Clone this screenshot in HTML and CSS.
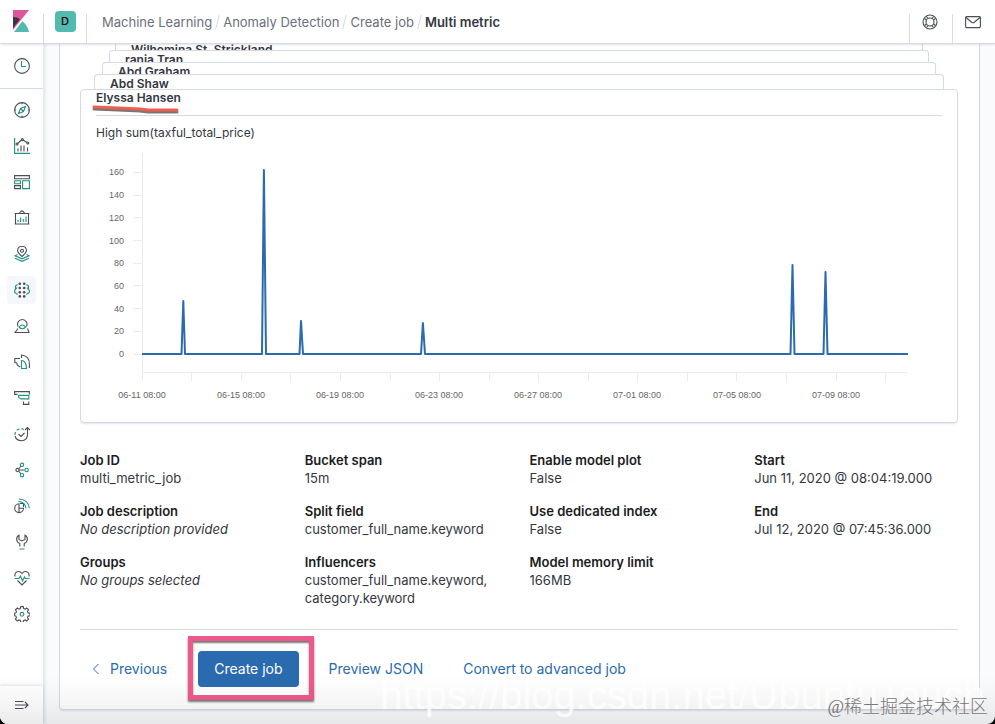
FILE: index.html
```html
<!DOCTYPE html>
<html lang="en">
<head>
    <meta charset="UTF-8">
    <meta name="viewport" content="width=device-width, initial-scale=1.0">
    <title>Create job - Multi metric</title>
    <link rel="stylesheet" href="styles.css">
</head>
<body>
<div class="app">
    <header class="header">
        <a href="#" class="logo" aria-label="Home">
            <svg width="16" height="22" viewBox="0 0 16 22">
                <path fill="#e0569b" d="M0 0h16L0 20z"/>
                <path fill="#343741" d="M0 7c3 0 5 .8 7 2.2L0 18z"/>
                <path fill="#54b9ae" d="M9.2 11.2c3.600 2.500 6 6.300 6.800 10.800H1z"/>
            </svg>
        </a>
        <div class="space"><button type="button" class="avatar">D</button></div>
        <nav class="breadcrumbs" aria-label="Breadcrumbs">
            <a href="#">Machine Learning</a>
            <a href="#">Anomaly Detection</a>
            <a href="#">Create job</a>
            <strong>Multi metric</strong>
        </nav>
        <button type="button" class="header-button" aria-label="Help">
            <svg width="16" height="16" viewBox="0 0 16 16" class="icon">
                <circle cx="8" cy="8" r="7"/>
                <circle cx="8" cy="8" r="4"/>
                <path d="M2.500 4.500l2 1.500M4.500 2.500l1.500 2M13.500 4.500l-2 1.500M11.500 2.500l-1.500 2M2.500 11.500l2-1.500M4.500 13.500l1.500-2M13.500 11.500l-2-1.500M11.500 13.500l-1.500-2"/>
            </svg>
        </button>
        <button type="button" class="header-button" aria-label="News">
            <svg width="16" height="16" viewBox="0 0 16 16" class="icon">
                <rect x=".6" y="2.600" width="14.800" height="11" rx="1"/>
                <path d="M1 3.500l6 5q1 .7 2 0l6-5"/>
            </svg>
        </button>
    </header>

    <div class="body">
        <nav class="sidebar" aria-label="Main">
            <a href="#" class="recent" aria-label="Recently viewed">
                <svg width="16" height="16" viewBox="0 0 16 16" class="icon"><circle cx="8" cy="8" r="7.400"/><path class="teal" d="M7.500 3v5.500H12"/></svg>
            </a>
            <ul>
                <li><a href="#" aria-label="Discover">
                    <svg width="16" height="16" viewBox="0 0 16 16" class="icon"><circle cx="8" cy="8" r="7.400"/><path d="M8 .6v1.600M8 13.800v1.600M.6 8h1.600M13.800 8h1.600"/><path class="teal" d="M11.500 4.500L9.500 9.500l-5 2 2-5zM7 7l2 2"/></svg>
                </a></li>
                <li><a href="#" aria-label="Visualize">
                    <svg width="16" height="16" viewBox="0 0 16 16" class="icon"><path class="teal" d="M.6 0v15.400H16"/><path d="M4 13.500v-3M7 13.500v-6M10 13.500v-6M13.500 13.500v-4M3.500 5.500l4-3.500M9 2l4 2.500"/><circle cx="3" cy="6" r="1"/><circle cx="8.300" cy="1.600" r="1"/><circle cx="13.800" cy="5" r="1"/></svg>
                </a></li>
                <li><a href="#" aria-label="Dashboard">
                    <svg width="16" height="16" viewBox="0 0 16 16" class="icon"><path d="M.6 1.600h14.800v3.200H.6zM.6 11.600h5.800v3H.6z"/><path class="teal" d="M.6 6.800h5.800v2.900H.6zM8.600 6.800h6.800v7.800H8.600z"/></svg>
                </a></li>
                <li><a href="#" aria-label="Canvas">
                    <svg width="16" height="16" viewBox="0 0 16 16" class="icon"><path d="M.6 3.500h14.800M1.500 3.500v10.500M14.500 3.500v10.500M.6 14h14.800M5 3.500l2-2.200q1-.8 2 0l2 2.200"/><path class="teal" d="M4 12v-2M6.600 12V7.500M9.300 12V9M12 12V6.500"/></svg>
                </a></li>
                <li><a href="#" aria-label="Maps">
                    <svg width="16" height="16" viewBox="0 0 16 16" class="icon"><path d="M8 10.500C5 8 3.600 6.500 3.600 4.600a4.400 4.400 0 0 1 8.800 0C12.400 6.500 11 8 8 10.500z"/><circle cx="8" cy="4.800" r="1.500"/><path class="teal" d="M3.500 8.500L1 9.800l7 3 7-3-2.500-1.300M1 12.300l7 3 7-3"/></svg>
                </a></li>
                <li><a href="#" class="active" aria-label="Machine Learning">
                    <svg width="16" height="16" viewBox="0 0 16 16" class="icon"><path class="teal" d="M3.500 2.500L1.500 4v3L.7 8.500v2l3 2M12.500 2.500l2 1.500v3l.8 1.500v2l-3 2M3 5.500l-1.500 2M13 5.500l1.500 2"/><g class="dots"><circle cx="5.800" cy="1.800" r="1.300"/><circle cx="10.200" cy="1.800" r="1.300"/><circle cx="5.800" cy="6" r="1.300"/><circle cx="10.200" cy="6" r="1.300"/><circle cx="5.800" cy="10.200" r="1.300"/><circle cx="10.200" cy="10.200" r="1.300"/><circle cx="5.800" cy="14.400" r="1.300"/><circle cx="10.200" cy="14.400" r="1.300"/></g></svg>
                </a></li>
                <li><a href="#" aria-label="Metrics">
                    <svg width="16" height="16" viewBox="0 0 16 16" class="icon"><path d="M4.200 8.500a4.700 4.700 0 1 1 8.200 0M4 10.500l-3 4h14l-1.500-4"/><path class="teal" d="M5 9q3.300-4 6.600 0-3.300 3.500-6.600 0z"/></svg>
                </a></li>
                <li><a href="#" aria-label="Logs">
                    <svg width="16" height="16" viewBox="0 0 16 16" class="icon"><path d="M6 4.500H.8v4l2 .5.500 2L6 13M7.500 4V1c5 .5 7.900 4 7.900 9v4"/><path class="teal" d="M7.500 6.500c3 0 5 3 5 8h-5z"/></svg>
                </a></li>
                <li><a href="#" aria-label="APM">
                    <svg width="16" height="16" viewBox="0 0 16 16" class="icon"><path d="M3.500 4.400H.6V1.600h14.800v2.800M9.500 11.600v2.800h5.300v-2.800"/><path class="teal" d="M4.600 5.400h10.200v3.500H7L4.600 7.500z"/></svg>
                </a></li>
                <li><a href="#" aria-label="Uptime">
                    <svg width="16" height="16" viewBox="0 0 16 16" class="icon"><path class="teal" stroke-dasharray="3 2" d="M1 9a6 6 0 0 1 9-5.500"/><path d="M1 10c2 6.500 11.800 6.500 12.500-1V2M11 4l2.500-2.500L16 4M4.500 8L7 10.500 10.500 7"/></svg>
                </a></li>
                <li><a href="#" aria-label="Graph">
                    <svg width="16" height="16" viewBox="0 0 16 16" class="icon"><path d="M4.500 8h6M5 6.500l2-2.500M5 9.500L7 12"/><circle cx="3.500" cy="8" r="1.600"/><g class="teal"><circle cx="8" cy="2.800" r="1.700"/><circle cx="12.600" cy="8" r="1.700"/><circle cx="8" cy="13.200" r="1.700"/></g></svg>
                </a></li>
                <li><a href="#" aria-label="SIEM">
                    <svg width="16" height="16" viewBox="0 0 16 16" class="icon"><path d="M5 5.800a4.400 4.400 0 1 0 4.500 4.500H5zM5 10L5 14.500M9.500 9V5.500H6"/><path class="teal" d="M4.500 3.500c4 0 7.500 3 7.500 7M5 1c6 0 10 4 10.300 9"/></svg>
                </a></li>
                <li><a href="#" aria-label="Dev Tools">
                    <svg width="16" height="16" viewBox="0 0 16 16" class="icon"><path d="M5.800 12.500V9.500C2 8 1.500 3 5 1.200V5.500l3 1.500 3-1.500V1.200C14.500 3 14 8 10.200 9.500v3"/><path class="teal" d="M5.500 15h5"/></svg>
                </a></li>
                <li><a href="#" aria-label="Stack Monitoring">
                    <svg width="16" height="16" viewBox="0 0 16 16" class="icon"><path d="M1 6.500c-1-5 4.500-6.500 7-3 2.500-3.500 8-2 7 3M3.500 10.500L8 15l4.500-4.500"/><path class="teal" d="M.5 8.500H5l1.500-2.500 2 5 2-4 .8 1.500h4.200"/></svg>
                </a></li>
                <li><a href="#" aria-label="Management">
                    <svg width="16" height="16" viewBox="0 0 16 16" class="icon"><path d="M6.700.6h2.600l.4 1.900 1.400.6 1.600-1.100 1.900 1.900-1.100 1.600.6 1.400 1.900.4v2.400l-1.900.4-.6 1.400 1.100 1.600-1.900 1.900-1.600-1.100-1.400.6-.4 1.900H6.700l-.4-1.900-1.400-.6L3.300 15l-1.900-1.900 1.100-1.600-.6-1.400-1.300-.4V7.300l1.300-.4.600-1.400-1.100-1.600L3.300 2l1.600 1.100 1.400-.6z"/><circle class="teal" cx="8" cy="8.300" r="1.900"/></svg>
                </a></li>
            </ul>
            <button type="button" class="expand" aria-label="Expand navigation">
                <svg width="16" height="16" viewBox="0 0 16 16" class="icon"><path d="M1 4.500h8.500M1 8h13M1 11.500h8.500M11 5l3 3-3 3"/></svg>
            </button>
        </nav>

        <main class="main">
            <section class="panel">
                <div class="stack">
                    <div class="card card-back card-5">Wilhemina St. Strickland</div>
                    <div class="card card-back card-4">rania Tran</div>
                    <div class="card card-back card-3">Abd Graham</div>
                    <div class="card card-back card-2">Abd Shaw</div>
                    <div class="card card-front">
                        <h2 class="card-title">Elyssa Hansen
                            <svg class="underline" width="90" height="12" viewBox="0 0 90 12">
                                <path class="underline-shadow" d="M3 5l24 1 22 1 8 1h29"/>
                                <path class="underline-line" d="M3 3l24 1 22 1 8 1h29"/>
                            </svg>
                        </h2>
                        <h3 class="chart-title">High sum(taxful_total_price)</h3>
                        <svg class="chart" viewBox="0 0 846 268" role="img" aria-label="High sum(taxful_total_price)">
                            <path class="axis" d="M46.500 12v222M46 231.500h766"/>
                            <path class="axis" d="M37 31.500h9M37 54.500h9M37 76.500h9M37 99.500h9M37 122.500h9M37 144.500h9M37 167.500h9M37 190.500h9M37 213.500h9"/>
                            <path class="axis" d="M46.500 231v9M95.500 231v9M145.500 231v9M194.500 231v9M244.500 231v9M294.500 231v9M343.500 231v9M393.500 231v9M442.500 231v9M492.500 231v9M541.500 231v9M591.500 231v9M640.500 231v9M690.500 231v9M740.500 231v9M789.500 231v9"/>
                            <g class="y-labels">
                                <text x="28" y="34">160</text>
                                <text x="28" y="57">140</text>
                                <text x="28" y="80">120</text>
                                <text x="28" y="103">100</text>
                                <text x="28" y="125">80</text>
                                <text x="28" y="148">60</text>
                                <text x="28" y="171">40</text>
                                <text x="28" y="193">20</text>
                                <text x="28" y="216">0</text>
                            </g>
                            <g class="x-labels">
                                <text x="46" y="257">06-11 08:00</text>
                                <text x="145" y="257">06-15 08:00</text>
                                <text x="244" y="257">06-19 08:00</text>
                                <text x="343" y="257">06-23 08:00</text>
                                <text x="442" y="257">06-27 08:00</text>
                                <text x="541" y="257">07-01 08:00</text>
                                <text x="641" y="257">07-05 08:00</text>
                                <text x="740" y="257">07-09 08:00</text>
                            </g>
                            <path class="line" d="M46 213H85.500L87.300 160L89 213H166L167.900 29L170 213H203.500L205 180L207 213H325L326.900 182L329 213H694.500L696.500 124L698.500 213H727.500L729.500 131L731.500 213H812"/>
                        </svg>
                    </div>
                </div>

                <div class="details">
                    <dl>
                        <div><dt>Job ID</dt><dd>multi_metric_job</dd></div>
                        <div><dt>Job description</dt><dd class="empty">No description provided</dd></div>
                        <div><dt>Groups</dt><dd class="empty">No groups selected</dd></div>
                    </dl>
                    <dl>
                        <div><dt>Bucket span</dt><dd>15m</dd></div>
                        <div><dt>Split field</dt><dd>customer_full_name.keyword</dd></div>
                        <div><dt>Influencers</dt><dd>customer_full_name.keyword, category.keyword</dd></div>
                    </dl>
                    <dl>
                        <div><dt>Enable model plot</dt><dd>False</dd></div>
                        <div><dt>Use dedicated index</dt><dd>False</dd></div>
                        <div><dt>Model memory limit</dt><dd>166MB</dd></div>
                    </dl>
                    <dl>
                        <div><dt>Start</dt><dd>Jun 11, 2020 @ 08:04:19.000</dd></div>
                        <div><dt>End</dt><dd>Jul 12, 2020 @ 07:45:36.000</dd></div>
                    </dl>
                </div>

                <div class="actions">
                    <button type="button" class="btn-link btn-previous">
                        <svg width="8" height="12" viewBox="0 0 8 12"><path d="M6.500 1l-5 5 5 5"/></svg>
                        Previous
                    </button>
                    <div class="highlight">
                        <button type="button" class="btn-fill">Create job</button>
                    </div>
                    <button type="button" class="btn-link">Preview JSON</button>
                    <button type="button" class="btn-link">Convert to advanced job</button>
                </div>
            </section>
        </main>
    </div>

    <div class="bottom-fade"></div>
    <div class="watermark-url">https://blog.csdn.net/UbuntuTouch</div>
    <div class="watermark-site">@稀土掘金技术社区</div>
</div>
</body>
</html>
```

FILE: styles.css
```css
* {
    box-sizing: border-box;
}
html {
    background-color: #000;
}
body {
    margin: 0;
    font-family: Inter, "Noto Sans CJK SC", sans-serif;
    font-size: 13px;
    line-height: 18px;
    color: #343741;
}
button {
    font: inherit;
    color: inherit;
    background: none;
    border: 0;
    padding: 0;
    cursor: pointer;
}
a {
    color: inherit;
    text-decoration: none;
}
.app {
    position: relative;
    min-height: 100vh;
    display: flex;
    flex-direction: column;
    background-color: #fafbfd;
    border-radius: 0 0 8px 8px;
    overflow: hidden;
}
.icon {
    display: block;
    fill: none;
    stroke: #4a4e58;
    stroke-width: 1.1;
}
.teal {
    stroke: #209186;
}
.dots {
    fill: #4a4e58;
    stroke: none;
}

/* Header */
.header {
    position: relative;
    z-index: 2;
    display: flex;
    align-items: flex-end;
    height: 44px;
    background-color: #fff;
    border-bottom: 1px solid #d3dae6;
    box-shadow: 0 2px 2px -1px rgba(152, 162, 179, 0.3);
}
.logo {
    width: 43px;
    height: 33px;
    padding-left: 13px;
}
.space {
    width: 44px;
    height: 29px;
    border-left: 1px solid #d3dae6;
    border-right: 1px solid #d3dae6;
    display: flex;
    justify-content: center;
    align-items: flex-end;
    padding-bottom: 11px;
}
.avatar {
    width: 21px;
    height: 21px;
    flex-shrink: 0;
    border-radius: 4px;
    background-color: #54b9ae;
    color: #000;
    font-size: 11px;
    font-weight: 500;
    line-height: 21px;
    text-align: center;
}
.breadcrumbs {
    flex: 1;
    display: flex;
    padding: 0 0 12px 15px;
    color: #69707d;
    white-space: nowrap;
}
.breadcrumbs a::after {
    content: "";
    display: inline-block;
    width: 1px;
    height: 14px;
    margin: 0 5px;
    vertical-align: -2px;
    background-color: #d3dae6;
    transform: rotate(15deg);
}
.breadcrumbs strong {
    color: #343741;
    font-weight: 600;
}
.header-button {
    width: 43px;
    height: 29px;
    padding: 0 0 13px 12px;
    border-left: 1px solid #d3dae6;
    display: flex;
    align-items: flex-end;
}

/* Sidebar */
.body {
    flex: 1;
    display: flex;
}
.sidebar {
    width: 44px;
    flex-shrink: 0;
    display: flex;
    flex-direction: column;
    background-color: #fff;
    border-right: 1px solid #e6eaf1;
    box-shadow: 1px 0 3px rgba(152, 162, 179, 0.25);
}
.recent {
    height: 45px;
    display: flex;
    justify-content: center;
    align-items: center;
    border-bottom: 1px solid #d3dae6;
}
.sidebar ul {
    list-style: none;
    margin: 0;
    padding: 7px;
    display: flex;
    flex-direction: column;
    gap: 8px;
}
.sidebar li a {
    display: flex;
    justify-content: center;
    align-items: center;
    height: 28px;
    border-radius: 4px;
}
.sidebar li a.active {
    background-color: #f5f7fa;
}
.expand {
    margin-top: auto;
    height: 38px;
    display: flex;
    justify-content: center;
    align-items: center;
    box-shadow: 0 -1px 3px rgba(152, 162, 179, 0.3);
}

/* Panel */
.main {
    flex: 1;
    min-width: 0;
    padding: 0 15px 14px;
}
.panel {
    height: 100%;
    padding: 0 21px 22px 20px;
    background-color: #fff;
    border: 1px solid #d3dae6;
    border-top: 0;
    border-radius: 0 0 4px 4px;
    box-shadow: 0 2px 2px -1px rgba(152, 162, 179, 0.3);
}

/* Split cards */
.card {
    background-color: #fff;
    border: 1px solid #d3dae6;
    border-radius: 4px;
    padding: 0 15px;
}
.card-back {
    height: 12px;
    border-bottom: 0;
    border-radius: 4px 4px 0 0;
    font-size: 12px;
    font-weight: 600;
    line-height: 18px;
    overflow: hidden;
}
.card-5 {
    height: 6px;
    margin: 0 35px;
    border-top: 0;
    border-radius: 0;
    line-height: 12px;
}
.card-4 {
    margin: 0 29px;
}
.card-3 {
    margin: 0 22px;
}
.card-2 {
    height: 15px;
    margin: 0 14px;
}
.card-front {
    box-shadow: 0 2px 2px -1px rgba(152, 162, 179, 0.3);
    padding-bottom: 13px;
}
.card-title {
    position: relative;
    margin: 0 0 8px;
    padding-bottom: 9px;
    border-bottom: 1px solid #d3dae6;
    font-size: 12px;
    font-weight: 600;
    line-height: 16px;
}
.underline {
    position: absolute;
    left: -5px;
    top: 14px;
    fill: none;
}
.underline-line {
    stroke: #ee5f4f;
    stroke-width: 3;
    stroke-linecap: round;
}
.underline-shadow {
    stroke: #777;
    stroke-width: 3;
    stroke-linecap: round;
}
.chart-title {
    margin: 0;
    font-size: 12px;
    font-weight: 400;
    line-height: 17px;
}
.chart {
    display: block;
    width: 100%;
}
.chart text {
    font-family: "Liberation Sans", Arial, sans-serif;
    font-size: 9px;
    fill: #666;
}
.y-labels {
    text-anchor: end;
}
.x-labels {
    text-anchor: middle;
}
.axis {
    fill: none;
    stroke: #ebebeb;
}
.line {
    fill: none;
    stroke: #2a6bb0;
    stroke-width: 2;
    stroke-linejoin: round;
}

/* Job details */
.details {
    display: grid;
    grid-template-columns: repeat(4, 1fr);
    gap: 21px;
    padding: 28px 0 22px;
    border-bottom: 1px solid #d3dae6;
}
.details dl {
    margin: 0;
    display: flex;
    flex-direction: column;
    gap: 15px;
}
.details dt {
    color: #1a1c21;
    font-weight: 600;
}
.details dd {
    margin: 0;
}
.details .empty {
    font-style: italic;
}

/* Actions */
.actions {
    display: flex;
    align-items: center;
    padding: 21px 0 0 12px;
    font-size: 14px;
}
.btn-link {
    color: #2a6bb0;
    margin-right: 40px;
}
.btn-previous {
    display: flex;
    align-items: center;
    gap: 10px;
    margin-right: 31px;
}
.btn-previous svg {
    fill: none;
    stroke: #2a6bb0;
}
.btn-fill {
    height: 36px;
    padding: 0 16px;
    border-radius: 4px;
    background-color: #2a6bb0;
    color: #fff;
}
.highlight {
    position: relative;
    margin-right: 30px;
}
.highlight::after {
    content: "";
    position: absolute;
    inset: -15px -15px -13px -10px;
    border: 5px solid #ec5a8b;
    box-shadow: 0 2px 2px #777, inset 0 2px 2px #777;
    pointer-events: none;
}

/* Overlays */
.bottom-fade {
    position: absolute;
    left: 0;
    right: 0;
    bottom: 0;
    height: 48px;
    z-index: 3;
    background: linear-gradient(rgba(0, 0, 0, 0), rgba(0, 0, 0, 0.04) 60%, rgba(0, 0, 0, 0.08));
    pointer-events: none;
}
.watermark-url {
    position: absolute;
    right: 10px;
    bottom: 9px;
    z-index: 3;
    color: rgba(255, 255, 255, 0.8);
    font-family: "Liberation Sans", Arial, sans-serif;
    font-size: 40px;
    line-height: 40px;
    white-space: nowrap;
    pointer-events: none;
}
.watermark-site {
    position: absolute;
    right: 7px;
    bottom: 5px;
    z-index: 4;
    color: #777;
    font-family: "Liberation Serif", "Noto Sans CJK SC", serif;
    font-size: 18px;
    font-weight: 300;
    line-height: 24px;
    pointer-events: none;
}
```
